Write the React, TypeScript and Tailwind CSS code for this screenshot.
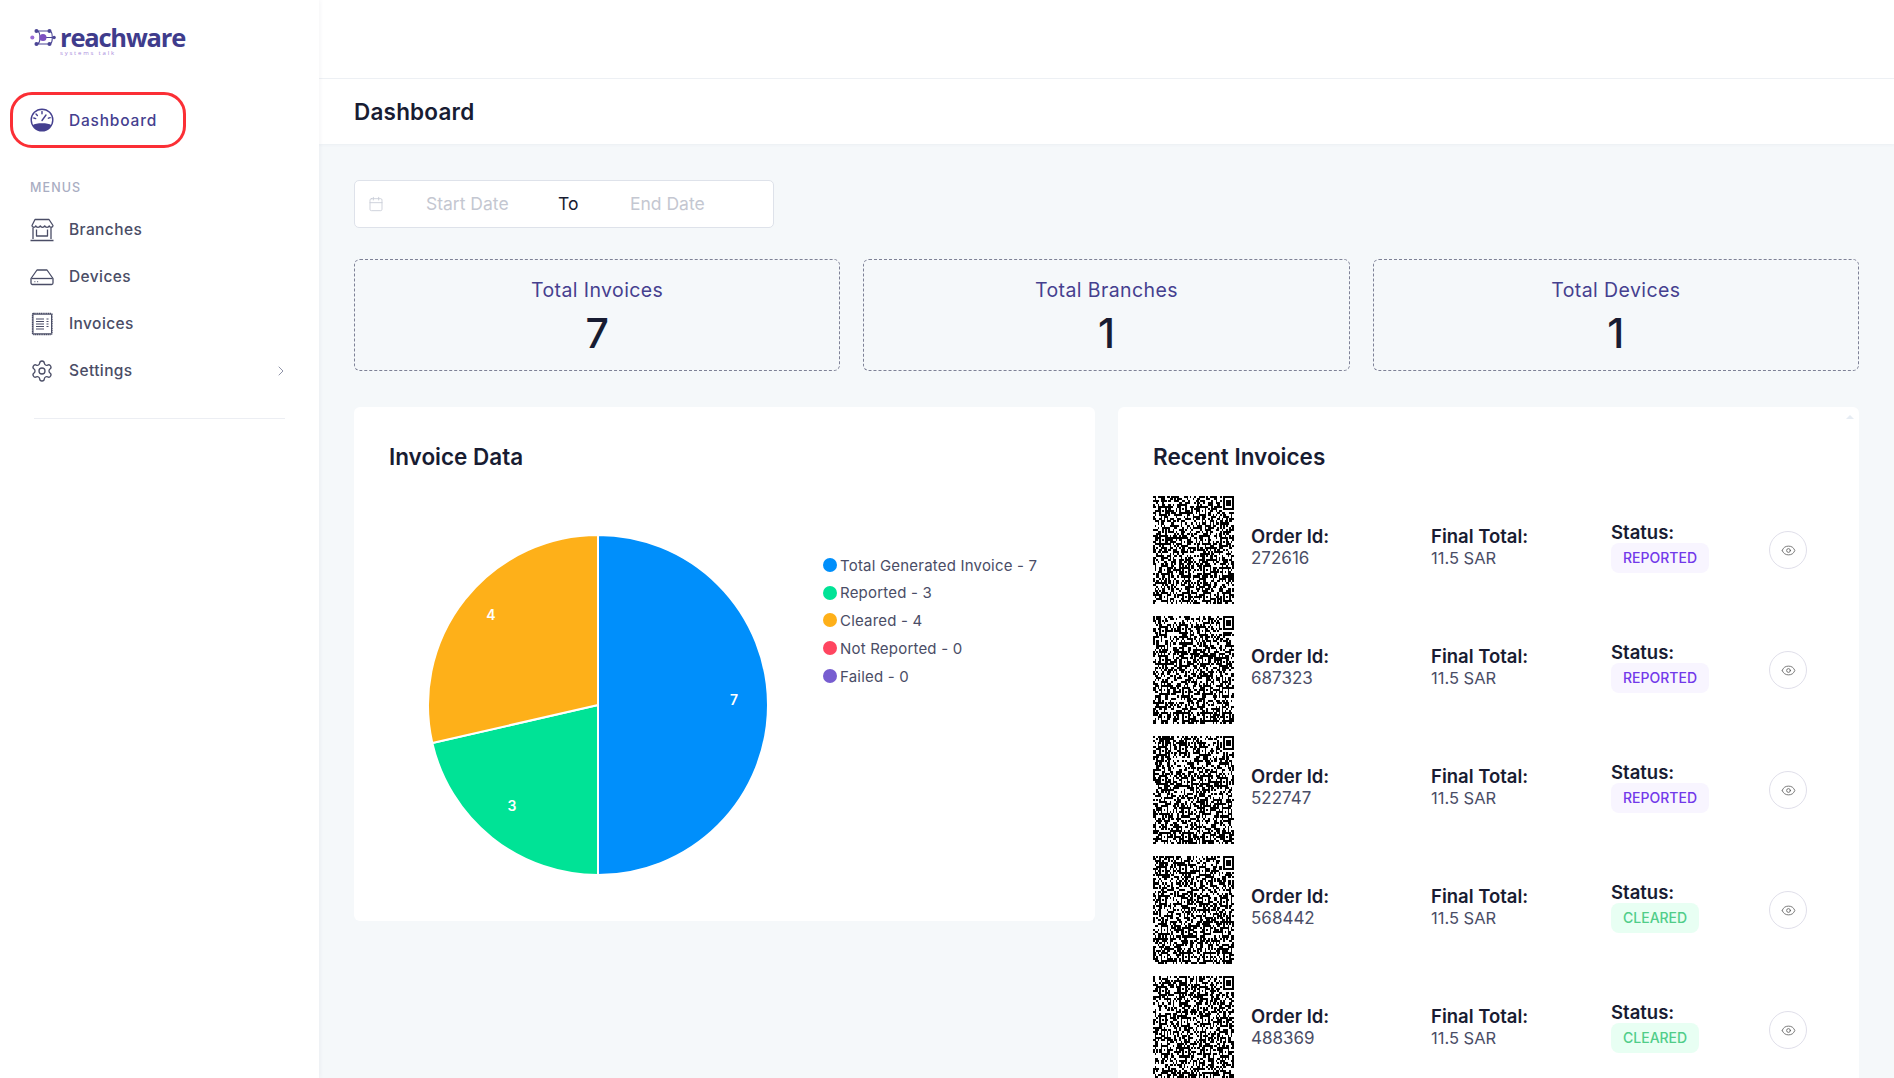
import { Calendar, ChevronRight, Eye, Settings } from "lucide-react";

const font = "font-['Inter','Liberation_Sans',sans-serif]";

const invoices = [
  { id: "272616", status: "REPORTED" },
  { id: "687323", status: "REPORTED" },
  { id: "522747", status: "REPORTED" },
  { id: "568442", status: "CLEARED" },
  { id: "488369", status: "CLEARED" },
];

const legend = [
  { label: "Total Generated Invoice - 7", color: "bg-[#008ffb]" },
  { label: "Reported - 3", color: "bg-[#00e396]" },
  { label: "Cleared - 4", color: "bg-[#feb019]" },
  { label: "Not Reported - 0", color: "bg-[#ff4560]" },
  { label: "Failed - 0", color: "bg-[#775dd0]" },
];

// pseudo random modules, seeded by order id so every code looks different
function QrCode({ seed }: { seed: number }) {
  const size = 53;
  let s = seed;
  const rand = () => {
    s = (s * 1664525 + 1013904223) % 4294967296;
    return (s >>> 12) / 1048576;
  };
  const cells: { x: number; y: number }[] = [];
  for (let y = 0; y < size; y++) {
    for (let x = 0; x < size; x++) {
      const inFinder = x >= size - 8 && y < 8;
      if (!inFinder && rand() > 0.5) cells.push({ x, y });
    }
  }
  const small = [
    [4, 5], [17, 4], [30, 5], [4, 19], [18, 20], [32, 19], [44, 20], [5, 34], [19, 35], [33, 34], [45, 35], [5, 47], [19, 47], [33, 47], [46, 47],
  ];
  return (
    <svg viewBox={`0 0 ${size} ${size}`} preserveAspectRatio="none" className="w-[81px] h-[108px] shrink-0" shapeRendering="crispEdges">
      {cells.map((c) => (
        <rect key={`${c.x}-${c.y}`} x={c.x} y={c.y} width="1" height="1" fill="#000" />
      ))}
      {small.map(([x, y]) => (
        <g key={`${x}-${y}`}>
          <rect x={x} y={y} width="5" height="5" fill="#000" />
          <rect x={x + 1} y={y + 1} width="3" height="3" fill="#fff" />
          <rect x={x + 2} y={y + 2} width="1" height="1" fill="#000" />
        </g>
      ))}
      <rect x={size - 7} y="0" width="7" height="7" fill="#000" />
      <rect x={size - 6} y="1" width="5" height="5" fill="#fff" />
      <rect x={size - 5} y="2" width="3" height="3" fill="#000" />
    </svg>
  );
}

function Logo() {
  return (
    <div className="flex items-center h-[92px] pl-[30px] pb-[18px]">
      <svg viewBox="0 0 28 22" className="w-[26px] h-[21px] mr-[4px]" fill="none">
        <path d="M7 4h14M7 18h14M21 4c4 0 4 14 0 14M7 4c5 0 5 14 0 14M14 11h12" stroke="#4b4595" strokeWidth="1.200" />
        <circle cx="7" cy="4" r="2.200" fill="#4b4595" />
        <circle cx="21" cy="4" r="2.200" fill="#4b4595" />
        <circle cx="7" cy="18" r="2.200" fill="#4b4595" />
        <circle cx="21" cy="18" r="2.200" fill="#4b4595" />
        <circle cx="14" cy="11" r="3.800" fill="#7c4fc0" />
        <circle cx="2.500" cy="11" r="2.200" fill="#9a6bd6" />
        <circle cx="26" cy="11" r="1.800" fill="#4b4595" />
      </svg>
      <div className="flex flex-col pt-[6px]">
        <span className="font-['Open_Sans',sans-serif] font-bold text-[25.500px] leading-[26px] tracking-[-1.200px] text-[#3f3c8c]">reachware</span>
        <span className="font-['Open_Sans',sans-serif] text-[6px] tracking-[1.800px] leading-[7px] text-[#a98bdc] whitespace-nowrap">systems talk</span>
      </div>
    </div>
  );
}

function GaugeIcon() {
  return (
    <svg viewBox="0 0 24 24" className="w-6 h-6">
      <circle cx="12" cy="12" r="10.800" fill="none" stroke="#45408f" strokeWidth="1.400" />
      <path d="M2.600 17.200C6 14.600 18 14.600 21.400 17.200A10.800 10.800 0 0 1 2.600 17.200Z" fill="#45408f" />
      <path d="M12 12.500l4-5.500M12 3.500v2.200M6 6l1.400 1.500M18.400 10.200l1.800-.6M3.800 10l1.900.6" stroke="#45408f" strokeWidth="1.400" strokeLinecap="round" />
    </svg>
  );
}

function StoreIcon() {
  return (
    <svg viewBox="0 0 24 24" className="w-6 h-6" fill="none" stroke="#4a4d66" strokeWidth="1.300" strokeLinejoin="round">
      <path d="M5 1.500h14l4 6c0 2.300-3.200 2.300-3.700.3-.6 2-3.900 2-4.600 0-.6 2-3.800 2-4.400 0-.7 2-4 2-4.600 0-.5 2-3.700 2-3.700-.3z" />
      <path d="M3 10v11M21 10v11M6.500 11.500v6.500h11v-6.500M.500 22.500h23" />
    </svg>
  );
}

function DeviceIcon() {
  return (
    <svg viewBox="0 0 24 24" className="w-6 h-6" fill="none" stroke="#4a4d66" strokeWidth="1.300" strokeLinejoin="round">
      <path d="M7 5h10l6 8.500v4.500a1.500 1.500 0 0 1-1.500 1.500h-19A1.500 1.500 0 0 1 1 18v-4.500z" />
      <path d="M1.500 13.500h21" />
      <path d="M4.500 16.700h.8M7.300 16.700h.8" strokeWidth="1.200" />
    </svg>
  );
}

function ReceiptIcon() {
  return (
    <svg viewBox="0 0 24 24" className="w-6 h-6" fill="none" stroke="#4a4d66" strokeWidth="1.300">
      <rect x="2.500" y="1.500" width="19.500" height="21" rx="1" strokeDasharray="1.300 .5" />
      <rect x="3" y="2.200" width="18.500" height="19.600" rx=".5" strokeWidth="1" />
      <path d="M6 7h8M6 9.500h8M6 12h8M6 14.500h8M6 17h8M16.500 7h2M16.500 9.500h2M16.500 12h2M16.500 14.500h2" strokeWidth="1.100" />
    </svg>
  );
}

function NavItem({ icon, label, chevron }: { icon: React.ReactNode; label: string; chevron?: boolean }) {
  return (
    <div className="flex items-center h-[47px] pl-[30px] pr-[30px]">
      {icon}
      <span className="ml-[15px] text-[15.500px] tracking-[0.4px] font-medium text-[#4a4d66]">{label}</span>
      {chevron && <ChevronRight className="ml-auto w-[16px] h-[16px] text-[#8f93a8]" strokeWidth={1.500} />}
    </div>
  );
}

function Sidebar() {
  return (
    <aside className="w-[319px] shrink-0 bg-white h-full shadow-[1px_0_4px_rgba(60,70,110,0.06)] z-10">
      <Logo />
      <div className="ml-[10px] w-[176px] h-[56px] rounded-[22px] border-[3px] border-[#fb2f35] flex items-center pl-[17px]">
        <GaugeIcon />
        <span className="ml-[15px] pt-[2px] text-[15.500px] tracking-[0.8px] font-medium text-[#45408f]">Dashboard</span>
      </div>
      <div className="mt-[34px] pl-[30px] text-[12.500px] tracking-[1.100px] font-medium leading-none text-[#a9adc2]">MENUS</div>
      <div className="mt-[12px]">
        <NavItem icon={<StoreIcon />} label="Branches" />
        <NavItem icon={<DeviceIcon />} label="Devices" />
        <NavItem icon={<ReceiptIcon />} label="Invoices" />
        <NavItem icon={<Settings className="w-6 h-6 text-[#4a4d66]" strokeWidth={1.300} />} label="Settings" chevron />
      </div>
      <div className="mt-[23px] mx-[34px] border-t border-[#eceef3]" />
    </aside>
  );
}

function StatCard({ title, value }: { title: string; value: string }) {
  return (
    <div className="flex-1 h-[112px] rounded-[6px] border border-dashed border-[#7e8196] flex flex-col items-center pt-[16px]">
      <div className="text-[19.500px] leading-[28px] tracking-[0.4px] text-[#45408f]">{title}</div>
      <div className="text-[41px] leading-[48px] mt-[5px] font-medium text-[#181c32]">{value}</div>
    </div>
  );
}

function PieChart() {
  return (
    <svg viewBox="0 0 344 344" className="w-[344px] h-[344px] shrink-0">
      <path d="M172 172V2A170 170 0 0 1 172 342Z" fill="#008ffb" stroke="#fff" strokeWidth="2" />
      <path d="M172 172V342A170 170 0 0 1 6.300 210Z" fill="#00e396" stroke="#fff" strokeWidth="2" />
      <path d="M172 172L6.300 210A170 170 0 0 1 172 2Z" fill="#feb019" stroke="#fff" strokeWidth="2" />
      <g fontFamily="Inter, sans-serif" fontSize="14" fontWeight="600" fill="#fff" textAnchor="middle">
        <text x="308" y="172">7</text>
        <text x="86" y="278">3</text>
        <text x="65" y="87">4</text>
      </g>
    </svg>
  );
}

function InvoiceChart() {
  return (
    <section className="flex-1 h-[514px] bg-white rounded-[6px] pl-[35px] pt-[35px]">
      <h2 className="text-[22.500px] leading-[30px] font-semibold text-[#181c32]">Invoice Data</h2>
      <div className="flex mt-[61px] ml-[37px]">
        <PieChart />
        <ul className="ml-[53px] mt-[19px] flex flex-col">
          {legend.map((l) => (
            <li key={l.label} className="flex items-center h-[27.800px] text-[15px] tracking-[0.2px] text-[#4a4d66]">
              <span className={`w-[14px] h-[14px] rounded-full mr-[3px] mb-[2px] ${l.color}`} />
              {l.label}
            </li>
          ))}
        </ul>
      </div>
    </section>
  );
}

function InvoiceRow({ id, status }: { id: string; status: string }) {
  const cleared = status === "CLEARED";
  return (
    <div className="flex items-center h-[108px] mb-[12px]">
      <QrCode seed={Number(id)} />
      <div className="ml-[17px] w-[180px] text-[17px] leading-[22px] text-[#4a4d66] pb-[7px]">
        <div className="text-[18.500px] font-semibold text-[#181c32]">Order Id:</div>
        <div>{id}</div>
      </div>
      <div className="w-[180px] text-[16.500px] leading-[22px] text-[#4a4d66] pb-[7px]">
        <div className="text-[18.500px] font-semibold text-[#181c32]">Final Total:</div>
        <div>11.5 SAR</div>
      </div>
      <div className="w-[158px] pb-[7px]">
        <div className="font-semibold text-[18.500px] leading-[22px] text-[#181c32]">Status:</div>
        <span
          className={`flex w-fit items-center h-[30px] rounded-[8px] px-[12px] text-[14px] font-medium ${
            cleared ? "bg-[#e8fff3] text-[#50cd89]" : "bg-[#f8f5ff] text-[#7239ea]"
          }`}
        >
          {status}
        </span>
      </div>
      <div className="w-[38px] h-[38px] rounded-full border border-[#e0dfea] flex items-center justify-center">
        <Eye className="w-[15px] h-[15px] text-[#5a5a5a]" strokeWidth={1.300} />
      </div>
    </div>
  );
}

function RecentInvoices() {
  return (
    <section className="relative flex-1 bg-white rounded-t-[6px] pl-[35px] pt-[35px]">
      <h2 className="text-[22.500px] leading-[30px] font-semibold text-[#181c32]">Recent Invoices</h2>
      <div className="mt-[24px]">
        {invoices.map((inv) => (
          <InvoiceRow key={inv.id} id={inv.id} status={inv.status} />
        ))}
      </div>
      <div className="absolute right-[5px] top-[8px] w-0 h-0 border-x-[4px] border-x-transparent border-b-[4px] border-b-[#e6ecf3]" />
    </section>
  );
}

export default function App() {
  return (
    <div className={`${font} flex w-full h-screen overflow-hidden bg-[#f5f8fa]`}>
      <Sidebar />
      <main className="flex-1 min-w-0 h-full">
        <div className="h-[79px] bg-white border-b border-[#eff2f5]" />
        <div className="h-[65px] bg-white flex items-center pl-[35px] shadow-[0_1px_3px_rgba(60,70,110,0.05)]">
          <h1 className="text-[22.500px] font-semibold tracking-[0.2px] text-[#181c32]">Dashboard</h1>
        </div>
        <div className="px-[35px] pt-[36px]">
          <div className="w-[420px] h-[48px] bg-white border border-[#dee2ea] rounded-[5px] flex items-center pl-[13px] text-[17.500px]">
            <Calendar className="w-[16px] h-[16px] text-[#c9ccd6]" strokeWidth={1.300} />
            <span className="ml-[42px] w-[132px] text-[#c4c7d1]">Start Date</span>
            <span className="text-[#181c32] w-[72px]">To</span>
            <span className="text-[#c4c7d1]">End Date</span>
          </div>
          <div className="flex gap-[23px] mt-[31px]">
            <StatCard title="Total Invoices" value="7" />
            <StatCard title="Total Branches" value="1" />
            <StatCard title="Total Devices" value="1" />
          </div>
          <div className="flex gap-[23px] mt-[36px] items-start">
            <InvoiceChart />
            <RecentInvoices />
          </div>
        </div>
      </main>
    </div>
  );
}
